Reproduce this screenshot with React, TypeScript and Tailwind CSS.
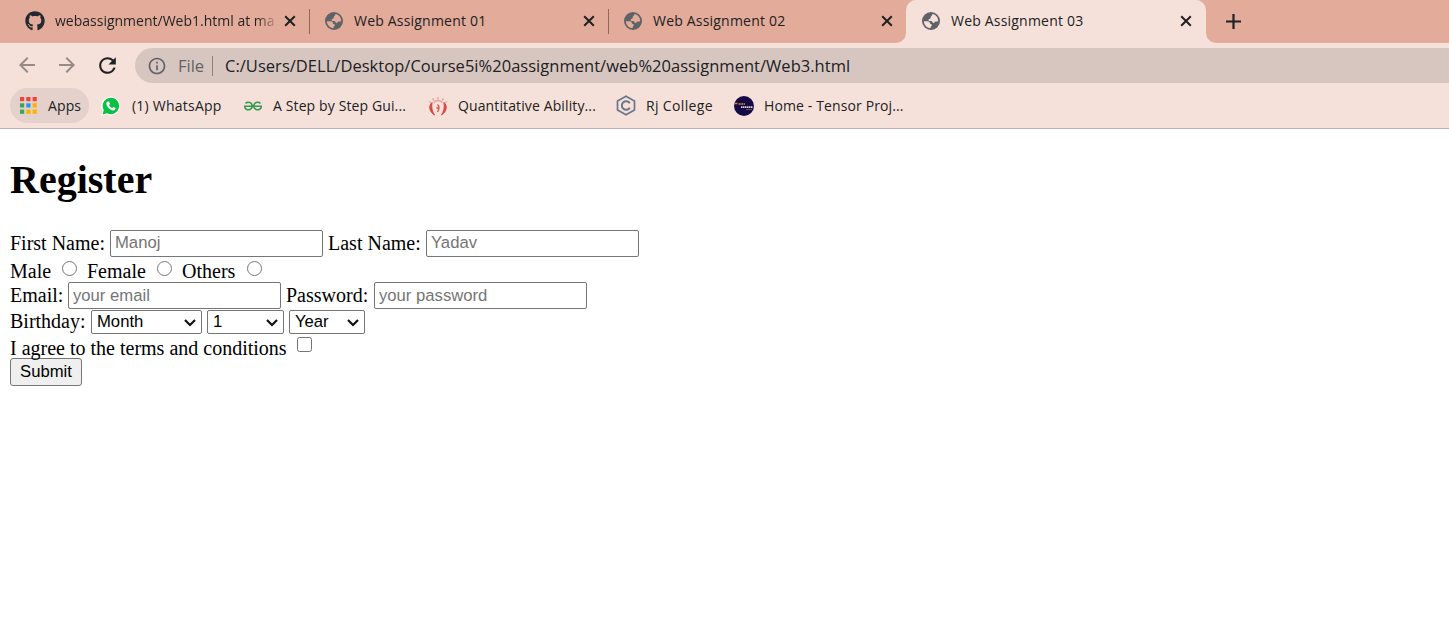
import React from "react";
import { FaGithub } from "react-icons/fa";
import { MdArrowBack, MdArrowForward, MdRefresh, MdInfoOutline } from "react-icons/md";
import { SiGeeksforgeeks } from "react-icons/si";

const ui = "font-['Open_Sans',sans-serif] whitespace-nowrap";

function CloseIcon() {
  return (
    <svg className="shrink-0" width="12" height="12" viewBox="0 0 12 12" stroke="#202124" strokeWidth="2" fill="none">
      <path d="M1.2 1.2l9.600 9.600M10.800 1.200l-9.600 9.600" />
    </svg>
  );
}

function GlobeIcon({ land }: { land: string }) {
  return (
    <svg className="shrink-0" width="20" height="20" viewBox="0 0 20 20">
      <circle cx="10" cy="10" r="9" fill="#5f6368" />
      <path
        d="M11.500 2.900C15 3.600 17.200 6.500 17.200 9.800C16.400 10.900 15.600 10.400 14.600 10.600C13.600 10.900 13.700 12.100 12.500 12.100C11.300 12.100 11.700 10.500 10.500 10.100C9.500 9.700 7.700 10.300 7.500 9C7.400 7.800 9.400 8 9.700 7C10 6.100 9.500 5.500 10.300 4.900C11 4.500 11.400 3.900 11.500 2.900Z"
        fill={land}
      />
      <path d="M2.900 10.200H6.800C8.200 10.300 8.700 11 8.800 12C9 13.200 10.700 12.700 10.800 14C10.900 15.200 9.600 15.300 9.500 17.100C5.900 17 3 14 2.900 10.200Z" fill={land} />
    </svg>
  );
}

function Tab({ title, width, land }: { title: string; width: string; land: string }) {
  return (
    <>
      <GlobeIcon land={land} />
      <span className={`${ui} ml-[10px] text-[14px] tracking-[0.2px] text-[#202124] ${width}`}>{title}</span>
      <CloseIcon />
    </>
  );
}

function AppsIcon() {
  const colors = ["#f44336", "#f44336", "#f44336", "#34a853", "#2196f3", "#fbb300", "#34a853", "#fbb300", "#fbb300"];
  return (
    <svg width="17" height="17" viewBox="0 0 17 17" className="shrink-0">
      {colors.map((c, i) => (
        <rect key={i} x={(i % 3) * 6.3} y={Math.floor(i / 3) * 6.3} width="4.2" height="4.2" fill={c} />
      ))}
    </svg>
  );
}

function LaurelIcon() {
  return (
    <svg width="20" height="20" viewBox="0 0 20 20" fill="none" className="shrink-0">
      <path d="M4 6.500C.5 9.500 1 15.500 6.500 19C4.200 15.500 3.200 12 4 6.500zM16 6.500C19.500 9.500 19 15.500 13.500 19C15.800 15.500 16.800 12 16 6.500z" fill="#dc4640" stroke="#dc4640" strokeWidth="1" />
      <path d="M5.500 6.500Q10 2.500 14.500 6.500M10 3.500V1M6 4.500L4.500 2.500M14 4.500L15.500 2.500M2.500 6.500L1 5.500M17.500 6.500L19 5.500" stroke="#e7a39d" strokeWidth="1.300" />
      <path d="M9.500 8.500Q12.500 11 9.500 16M8.500 11.500L10.500 12.500" stroke="#dd5b55" strokeWidth="1.400" />
    </svg>
  );
}

function CollegeIcon() {
  return (
    <svg width="20" height="21" viewBox="0 0 20 21" fill="none" stroke="#6b7788" strokeWidth="1.700" className="shrink-0">
      <path d="M10 1.200L18.500 5.900V15.100L10 19.800L1.500 15.100V5.900z" />
      <path d="M13.800 8.200A4.300 4.300 0 1 0 13.800 12.800" strokeWidth="2" />
    </svg>
  );
}

function TensorIcon() {
  return (
    <svg width="20" height="20" viewBox="0 0 20 20" className="shrink-0">
      <circle cx="10" cy="10" r="10" fill="#160a45" />
      <path d="M1 7.500h3M4.500 8h6.500" stroke="#c98a33" strokeWidth="1.500" strokeDasharray="2.200 .5" />
      <path d="M7 11.200h11.500" stroke="#d8d3e4" strokeWidth="1.800" strokeDasharray="1.500 .5" />
      <path d="M12 13.500h6" stroke="#8a6238" strokeWidth=".8" />
    </svg>
  );
}

function WhatsAppIcon() {
  return (
    <svg width="20" height="20" viewBox="0 0 20 20" className="shrink-0">
      <path d="M.3 19.800L1.300 14.500A9.500 9.500 0 1 1 5.500 18.600z" fill="#fff" />
      <path d="M1.700 18.400L2.700 14A8.200 8.200 0 1 1 6 17.200z" fill="#0bc144" />
      <path d="M6.800 5.600c-.5 0-1.500.8-1.400 2.200.2 3 4 6.600 6.900 6.600 1.200 0 2.300-.9 2.300-2.100 0-.4-1.800-1.300-2.200-1.300-.5 0-.8 1.200-1.300 1-1.300-.5-2.600-1.700-3-2.800-.1-.4.800-.8.800-1.300 0-.4-.8-2.200-1.200-2.300z" fill="#fff" />
    </svg>
  );
}

function Field({ placeholder, type = "text", pad = "" }: { placeholder: string; type?: string; pad?: string }) {
  return (
    <input
      type={type}
      placeholder={placeholder}
      className={`block h-[27px] w-[213px] shrink-0 appearance-none rounded-[2px] border border-[#767676] bg-white px-1 font-['Liberation_Sans',Arial,sans-serif] text-[16.67px] leading-5 placeholder:text-[#757575] ${pad}`}
    />
  );
}

function Select({ value, width }: { value: string; width: string }) {
  return (
    <div className={`relative mt-[2px] h-6 shrink-0 ${width}`}>
      <select className="block h-6 w-full appearance-none rounded-[2px] border border-[#767676] bg-white pl-[5px] font-['Liberation_Sans',Arial,sans-serif] text-[16.67px] leading-[22px] text-black">
        <option>{value}</option>
      </select>
      <svg className="pointer-events-none absolute right-[6px] top-[9px]" width="12" height="8" viewBox="0 0 12 8" fill="none" stroke="#101010" strokeWidth="2.200">
        <path d="M1 1l5 5 5-5" />
      </svg>
    </div>
  );
}

function Radio() {
  return <input type="radio" name="gender" className="mt-[3px] h-[15px] w-[15px] shrink-0 appearance-none rounded-full border border-[#767676] bg-white" />;
}

const label = "h-6 shrink-0 whitespace-nowrap leading-[26px]";

export default function App() {
  return (
    <div className="h-[621px] w-[1449px] overflow-hidden bg-white">
      <header className="h-[129px] border-b border-[#bcb0ad] bg-[#f5e1da]">
        <div className="flex h-[43px] bg-[#f5e1da]">
          <div className="flex h-[43px] w-[906px] items-center rounded-br-[10px] bg-[#e3ab99]">
            <div className="flex w-[309px] items-center pb-[2px] pl-[25px]">
              <FaGithub size={20} className="shrink-0 text-[#24292f]" />
              <span className={`${ui} ml-[10px] w-[229px] overflow-hidden bg-linear-to-r from-[#202124] from-[88%] to-[#20212400] to-[98%] bg-clip-text text-[14px] text-transparent`}>webassignment/Web1.html at ma</span>
              <CloseIcon />
            </div>
            <div className="flex h-[25px] w-[299px] items-center border-l border-[#91675c] pb-[2px] pl-[14px]">
              <Tab title="Web Assignment 01" width="w-[229px]" land="#e3ab99" />
            </div>
            <div className="flex h-[25px] w-[298px] items-center border-l border-[#91675c] pb-[2px] pl-[14px]">
              <Tab title="Web Assignment 02" width="w-[228px]" land="#e3ab99" />
            </div>
          </div>
          <div className="w-[300px] bg-[#e3ab99]">
            <div className="flex h-[43px] items-center rounded-t-[10px] bg-[#f5e1da] pb-[2px] pl-[15px]">
              <Tab title="Web Assignment 03" width="w-[229px]" land="#f5e1da" />
            </div>
          </div>
          <div className="flex flex-1 items-center rounded-bl-[10px] bg-[#e3ab99] pl-5">
            <svg width="15" height="15" viewBox="0 0 15 15" stroke="#202124" strokeWidth="2.200">
              <path d="M7.500 0v15M0 7.500h15" />
            </svg>
          </div>
        </div>
        <div className="flex h-[45px] items-center">
          <MdArrowBack size={24} className="mb-[2px] ml-[15px] text-[#978b88]" />
          <MdArrowForward size={24} className="mb-[2px] ml-4 text-[#978b88]" />
          <MdRefresh size={25} className="mb-[1px] ml-4 text-[#202124]" />
          <div className="ml-[15px] flex h-[35px] flex-1 items-center rounded-l-full bg-[#d7c6bf]">
            <MdInfoOutline size={20} className="ml-[12px] text-[#5f6368]" />
            <span className={`${ui} ml-[11px] w-[34px] pt-[2px] text-[16.5px] text-[#5f6368]`}>File</span>
            <span className="h-5 w-[1px] bg-[#8a817e]" />
            <span className={`${ui} ml-3 pt-[2px] text-[16.5px] tracking-[0.03px] text-[#202124]`}>C:/Users/DELL/Desktop/Course5i%20assignment/web%20assignment/Web3.html</span>
          </div>
        </div>
        <div className={`${ui} flex h-[35px] items-center text-[14px] tracking-[0.12px] text-[#202124]`}>
          <div className="ml-[10px] flex h-[35px] w-[79px] items-center rounded-full bg-[#e4d1cb] pl-[10px]">
            <AppsIcon />
            <span className="ml-[11px]">Apps</span>
          </div>
          <div className="ml-3 flex w-[143px] items-center gap-[11px]"><WhatsAppIcon /><span className="tracking-[0.23px]">(1) WhatsApp</span></div>
          <div className="flex w-[184px] items-center gap-[11px]"><SiGeeksforgeeks size={18} className="shrink-0 text-[#349953]" /><span>A Step by Step Gui...</span></div>
          <div className="flex w-[188px] items-center gap-[10px]"><LaurelIcon /><span>Quantitative Ability...</span></div>
          <div className="flex w-[118px] items-center gap-[10px]"><CollegeIcon /><span className="tracking-[0.35px]">Rj College</span></div>
          <div className="flex items-center gap-[10px]"><TensorIcon /><span>Home - Tensor Proj...</span></div>
        </div>
      </header>
      <main className="px-[10px] pt-7 font-['Liberation_Serif','Times_New_Roman',serif] text-[20px] text-black">
        <h1 className="mb-[27px] h-[46px] text-[40px] font-bold leading-[46px]">Register</h1>
        <form>
          <div className="flex h-7">
            <span className={`${label} w-[100px]`}>First Name:</span>
            <Field placeholder="Manoj" pad="pb-[2px]" />
            <span className={`${label} ml-[5px] w-[98px]`}>Last Name:</span>
            <Field placeholder="Yadav" pad="pb-[2px]" />
          </div>
          <div className="flex h-6">
            <span className={`${label} w-[52px]`}>Male</span>
            <Radio />
            <span className={`${label} ml-[10px] w-[70px]`}>Female</span>
            <Radio />
            <span className={`${label} ml-[10px] w-[65px]`}>Others</span>
            <Radio />
          </div>
          <div className="flex h-[26px]">
            <span className={`${label} w-[58px]`}>Email:</span>
            <Field placeholder="your email" />
            <span className={`${label} ml-[5px] w-[88px]`}>Password:</span>
            <Field placeholder="your password" type="password" />
          </div>
          <div className="flex h-[27px]">
            <span className={`${label} w-[81px]`}>Birthday:</span>
            <Select value="Month" width="w-[111px]" />
            <span className="w-[5px]" />
            <Select value="1" width="w-[77px]" />
            <span className="w-[5px]" />
            <Select value="Year" width="w-[76px]" />
          </div>
          <div className="flex h-[23px]">
            <span className={`${label} w-[287px]`}>I agree to the terms and conditions</span>
            <input type="checkbox" className="mt-[2px] h-[15px] w-[15px] shrink-0 appearance-none rounded-[2.5px] border border-[#767676] bg-white" />
          </div>
          <button type="button" className="block h-7 w-[72px] rounded-[3px] border border-[#767676] bg-[#efefef] text-center font-['Liberation_Sans',Arial,sans-serif] text-[16.67px] leading-[26px]">Submit</button>
        </form>
      </main>
    </div>
  );
}
